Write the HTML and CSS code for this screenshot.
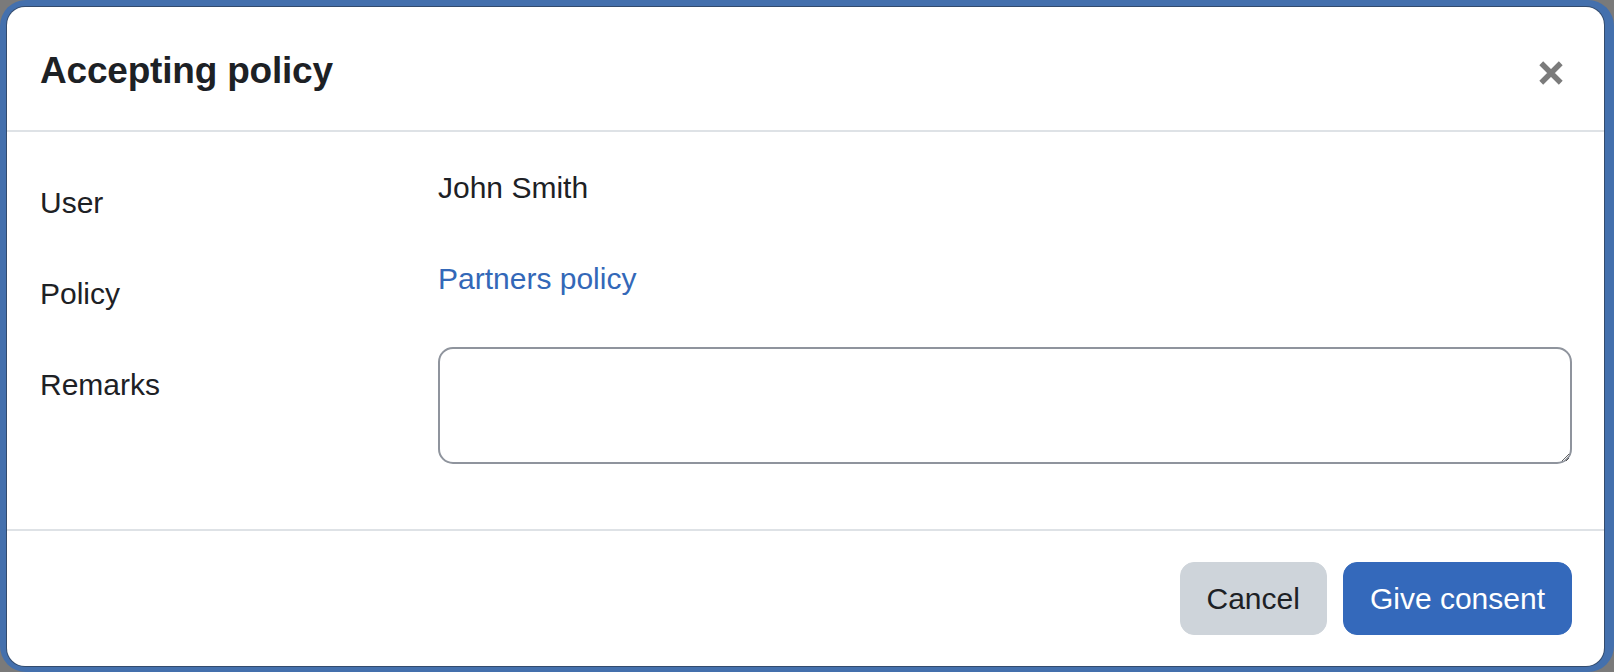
FILE: index.html
```html
<!DOCTYPE html>
<html lang="en">
<head>
<meta charset="utf-8">
<title>Accepting policy</title>
<link rel="stylesheet" href="styles.css">
</head>
<body>
<div class="frame">
  <div class="modal" role="dialog" aria-labelledby="modal-title">
    <div class="modal-header">
      <h2 class="modal-title" id="modal-title">Accepting policy</h2>
      <button class="close-btn" type="button" aria-label="Close">
        <svg width="26" height="26" viewBox="0 0 24 24" aria-hidden="true">
          <path d="M3 3 L21 21 M21 3 L3 21" stroke="#7b7b7b" stroke-width="5" stroke-linecap="butt" fill="none"/>
        </svg>
      </button>
    </div>
    <div class="modal-body">
      <div class="form-row">
        <div class="form-label">User</div>
        <div class="form-value">John Smith</div>
      </div>
      <div class="form-row">
        <div class="form-label">Policy</div>
        <div class="form-value"><a class="link" href="#">Partners policy</a></div>
      </div>
      <div class="form-row last">
        <div class="form-label">Remarks</div>
        <div class="form-value"><textarea class="remarks" aria-label="Remarks"></textarea></div>
      </div>
    </div>
    <div class="modal-footer">
      <button class="btn btn-secondary" type="button">Cancel</button>
      <button class="btn btn-primary" type="button">Give consent</button>
    </div>
  </div>
</div>
</body>
</html>
```

FILE: styles.css
```css
* {
  box-sizing: border-box;
}

html, body {
  margin: 0;
  padding: 0;
}

body {
  background: #7a7a7a;
  font-family: "Liberation Sans", Arial, sans-serif;
  color: #1d2125;
  width: 1614px;
  height: 672px;
  overflow: hidden;
}

.frame {
  background: #4470ad;
  border-radius: 26px;
  padding: 7px 10px 6px 7px;
  height: 672px;
}

.modal {
  background: #ffffff;
  border-radius: 18px;
  box-shadow: 0 0 0 1px rgba(30, 30, 30, 0.45);
  height: 659px;
  display: flex;
  flex-direction: column;
  overflow: hidden;
}

.modal-header {
  display: flex;
  align-items: flex-start;
  justify-content: space-between;
  padding: 42px 33px 37px 33px;
  border-bottom: 2px solid #dee2e6;
}

.modal-title {
  margin: 0;
  font-size: 37px;
  line-height: 44px;
  font-weight: 700;
  color: #1d2125;
  letter-spacing: -0.2px;
}

.close-btn {
  width: 40px;
  height: 36px;
  margin-top: 6px;
  padding: 0;
  border: 0;
  background: transparent;
  display: flex;
  align-items: center;
  justify-content: center;
  cursor: pointer;
}

.modal-body {
  padding: 33px 32px 65px 33px;
}

.form-row {
  display: grid;
  grid-template-columns: 398px 1fr;
  margin-bottom: 16px;
}

.form-row.last {
  margin-bottom: 0;
}

.form-label {
  font-size: 30px;
  line-height: 45px;
  padding: 15px 0;
}

.form-value {
  font-size: 30px;
  line-height: 45px;
}

.link {
  color: #3368b8;
  text-decoration: none;
}

.remarks {
  display: block;
  width: 100%;
  height: 117px;
  border: 2px solid #8f949d;
  border-radius: 15px;
  font-family: inherit;
  font-size: 30px;
  padding: 8px 14px;
  background: #ffffff;
  margin: 0;
}

.modal-footer {
  flex: 1;
  display: flex;
  align-items: center;
  justify-content: flex-end;
  gap: 16px;
  padding: 0 32px;
  border-top: 2px solid #dee2e6;
}

.btn {
  font-family: inherit;
  font-size: 30px;
  line-height: 45px;
  padding: 13px 26px;
  border: 1px solid transparent;
  border-radius: 14px;
  cursor: pointer;
}

.btn-secondary {
  background: #ced4da;
  border-color: #ced4da;
  color: #1d2125;
}

.btn-primary {
  background: #3469bb;
  border-color: #3469bb;
  color: #ffffff;
}
```
